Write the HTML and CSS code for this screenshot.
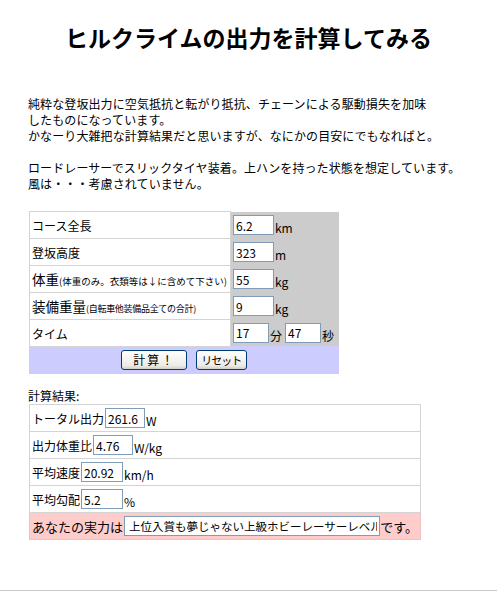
FILE: index.html
```html
<!DOCTYPE html>
<html lang="ja">
<head>
  <meta charset="UTF-8" />
  <title>ヒルクライムの出力を計算してみる</title>
  <link rel="stylesheet" href="styles.css">
</head>
<body>
  <div class="page">
    <h1>ヒルクライムの出力を計算してみる</h1>

    <p class="intro">
      純粋な登坂出力に空気抵抗と転がり抵抗、チェーンによる駆動損失を加味<br>
      したものになっています。<br>
      かなーり大雑把な計算結果だと思いますが、なにかの目安にでもなればと。<br>
      <br>
      ロードレーサーでスリックタイヤ装着。上ハンを持った状態を想定しています。<br>
      風は・・・考慮されていません。
    </p>

    <form id="calc">
      <table class="input-table">
        <tr>
          <th>コース全長</th>
          <td><div class="cell"><input class="num" type="text" value="6.2"><span class="unit">km</span></div></td>
        </tr>
        <tr>
          <th>登坂高度</th>
          <td><div class="cell"><input class="num" type="text" value="323"><span class="unit">m</span></div></td>
        </tr>
        <tr>
          <th><span class="big">体重</span><small>(体重のみ。衣類等は↓に含めて下さい)</small></th>
          <td><div class="cell"><input class="num" type="text" value="55"><span class="unit">kg</span></div></td>
        </tr>
        <tr>
          <th><span class="big">装備重量</span><small class="tight">(自転車他装備品全ての合計)</small></th>
          <td><div class="cell"><input class="num" type="text" value="9"><span class="unit">kg</span></div></td>
        </tr>
        <tr>
          <th>タイム</th>
          <td><div class="cell"><input class="num short" type="text" value="17"><span class="unit gap">分</span><input class="num short" type="text" value="47"><span class="unit">秒</span></div></td>
        </tr>
        <tr class="buttons">
          <td colspan="2">
            <button type="button" class="btn calc">計算！</button>
            <button type="reset" class="btn reset">リセット</button>
          </td>
        </tr>
      </table>
    </form>

    <div class="result-label">計算結果:</div>
    <table class="result-table">
      <tr><td><div class="cell">トータル出力<input class="out w40" type="text" value="261.6"><span class="unit">W</span></div></td></tr>
      <tr><td><div class="cell">出力体重比<input class="out w40" type="text" value="4.76"><span class="unit">W/kg</span></div></td></tr>
      <tr><td><div class="cell">平均速度<input class="out w42" type="text" value="20.92"><span class="unit">km/h</span></div></td></tr>
      <tr><td><div class="cell">平均勾配<input class="out w42" type="text" value="5.2"><span class="unit">%</span></div></td></tr>
      <tr class="level"><td><div class="cell">あなたの実力は<input class="out wide" type="text" value="上位入賞も夢じゃない上級ホビーレーサーレベル">です。</div></td></tr>
    </table>
  </div>
  <div class="footer-line"></div>
</body>
</html>
```

FILE: styles.css
```css
* {
  box-sizing: border-box;
}

body {
  margin: 0;
  font-family: "Noto Sans CJK JP", "Noto Sans", sans-serif;
  font-size: 12px;
  color: #000;
  background: #fff;
}

.page {
  padding: 0 0 0 28px;
}

h1 {
  margin: 22px 0 0 -28px;
  font-size: 23px;
  font-weight: bold;
  line-height: 30px;
  text-align: center;
}

.intro {
  margin: 44px 0 0;
  line-height: 16px;
  letter-spacing: 0.1px;
}

form {
  margin: 19px 0 0;
}

table {
  border-collapse: collapse;
  margin-left: 1px;
  table-layout: fixed;
}

.cell {
  display: flex;
  align-items: center;
  white-space: nowrap;
}

.input-table {
  width: 309px;
}

.input-table th {
  width: 201px;
  height: 27px;
  padding: 0 2px;
  text-align: left;
  font-weight: normal;
  background: #fff;
  border: 1px solid #d4d4d4;
  white-space: nowrap;
  overflow: hidden;
}

.input-table th .big {
  font-size: 13.5px;
}

.input-table th small {
  font-size: 9.5px;
}

.input-table th small.tight {
  font-size: 9px;
  letter-spacing: -0.3px;
}

.input-table td {
  width: 108px;
  height: 27px;
  padding: 0 2px;
  background: #cccccc;
}

input {
  font: inherit;
  font-size: 12px;
  height: 20px;
  padding: 0 2px;
  border: 1px solid #7f9db9;
  background: #fff;
  line-height: 18px;
}

.num {
  width: 41px;
}

.num.short {
  width: 36px;
}

.unit {
  padding-top: 5px;
  margin-left: 1px;
}

.unit.gap {
  margin-right: 3px;
}

.buttons td {
  background: #ccccff;
  text-align: center;
  padding: 0;
  border: 1px solid #ccccff;
}

.btn {
  font: inherit;
  font-size: 12px;
  height: 20px;
  padding: 0 4px;
  margin: 0 3px;
  border: 1px solid #003c74;
  border-radius: 3px;
  background: linear-gradient(#ffffff, #ecebe6 80%, #d6d0c5);
  line-height: 16px;
  cursor: pointer;
}

.btn.calc {
  width: 66px;
  letter-spacing: 2px;
}

.btn.reset {
  width: 51px;
  font-size: 11px;
  letter-spacing: -1px;
}

.result-label {
  margin-top: 14px;
  line-height: 16px;
}

.result-table {
  width: 392px;
}

.result-table td {
  height: 27px;
  padding: 0 2px;
  border: 1px solid #d4d4d4;
}

.out {
  margin-left: 1px;
}

.w40 {
  width: 40px;
}

.w42 {
  width: 42px;
}

.wide {
  width: 266px;
  font-size: 11.5px;
  padding-left: 4px;
}

.level td {
  background: #ffcccc;
  border-color: #f0c0c0;
  font-size: 13px;
}

.footer-line {
  margin-top: 50px;
  border-top: 2px solid #c8c8c8;
}
```
